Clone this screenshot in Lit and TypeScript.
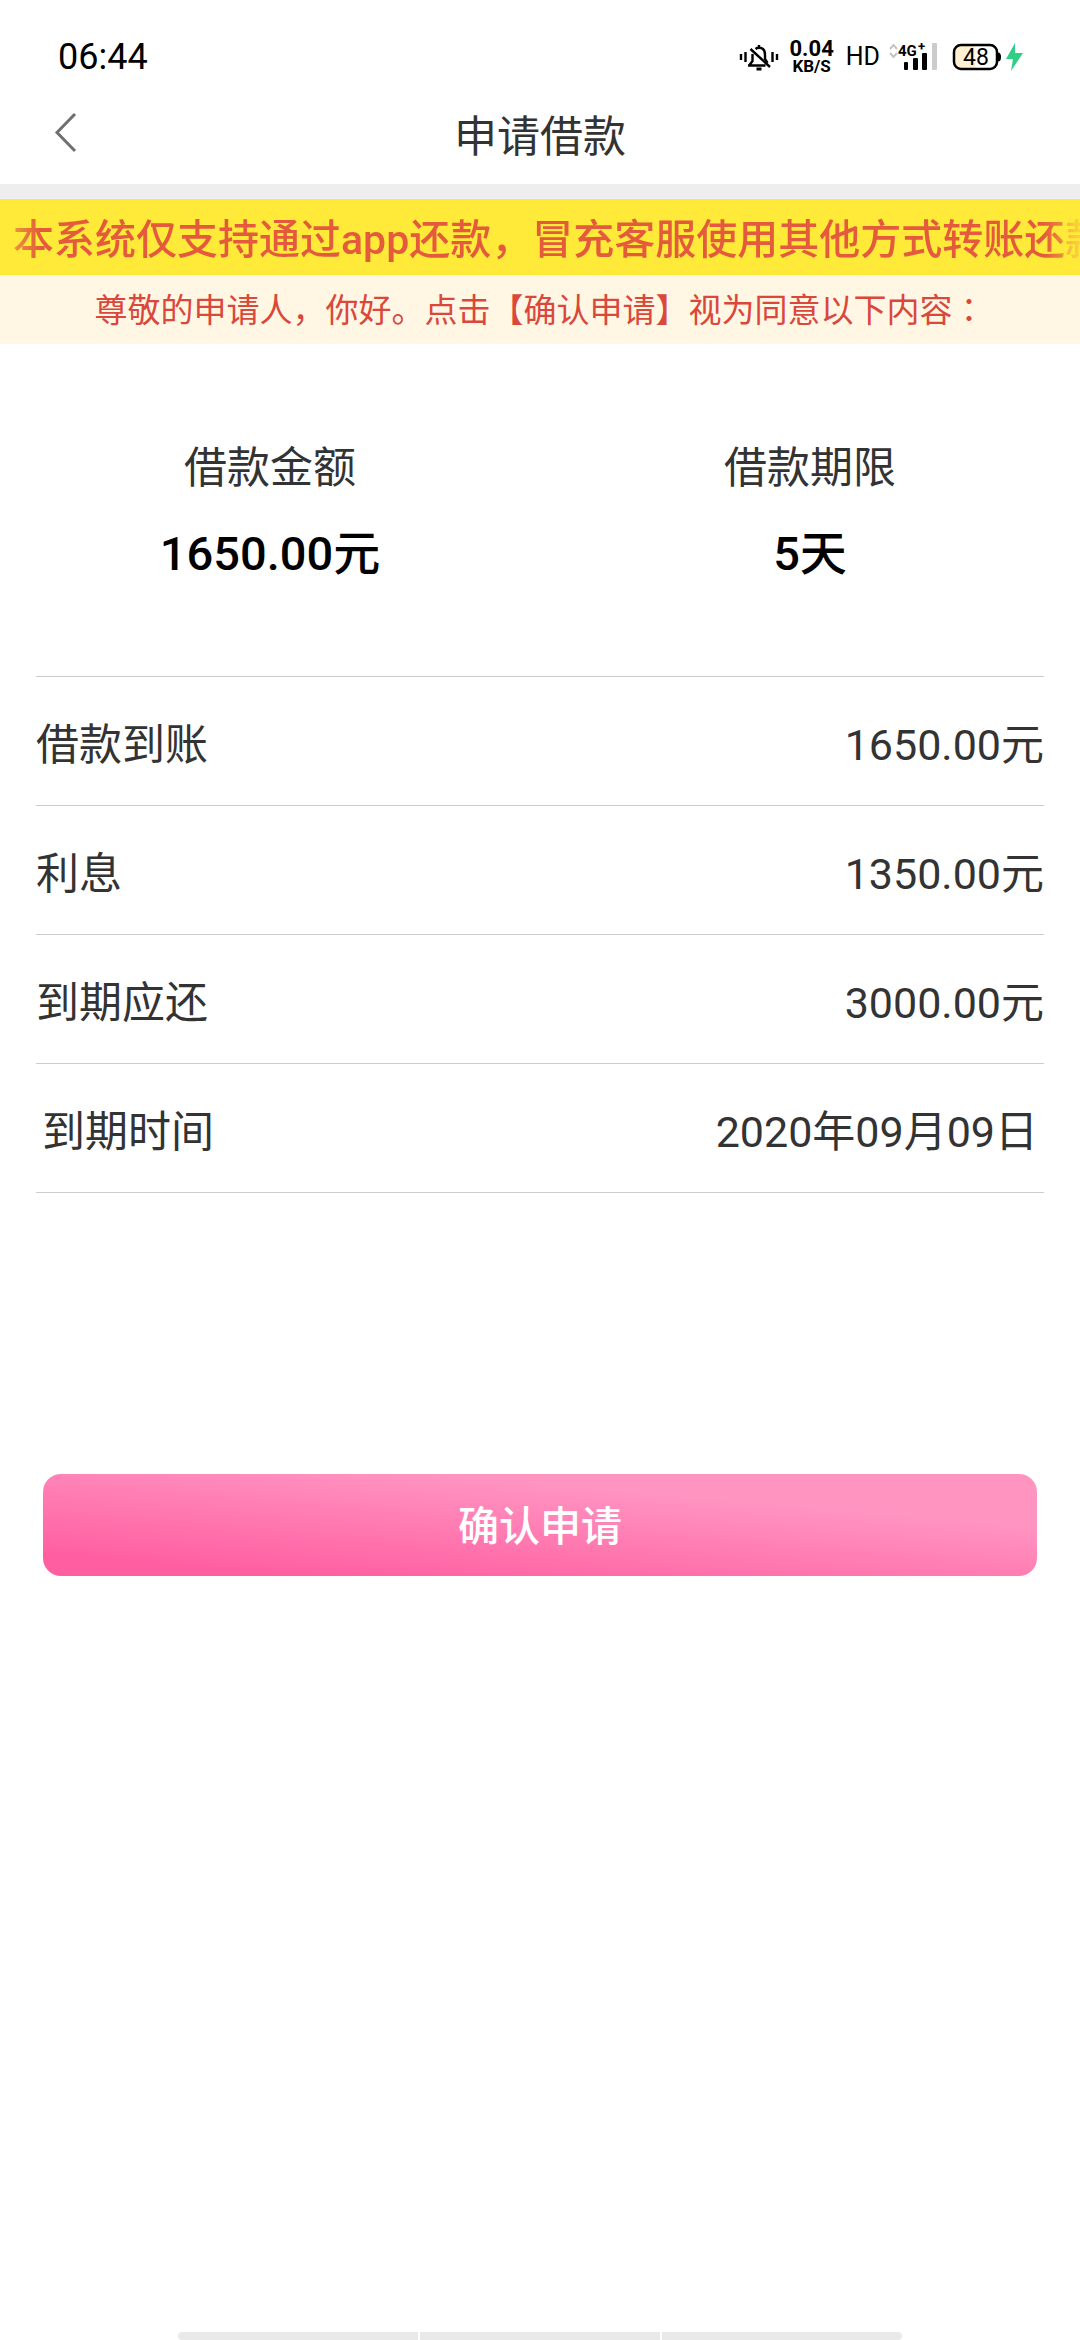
import { LitElement, html, css } from "lit";
import { customElement, property } from "lit/decorators.js";

const FONT = css`Roboto, "Noto Sans CJK SC", sans-serif`;

@customElement("status-bar")
class StatusBar extends LitElement {
  static styles = css`
    :host {
      display: flex;
      align-items: center;
      justify-content: space-between;
      padding: 18px 56px 0 58px;
      height: 78px;
      color: #000;
      font-family: ${FONT};
    }
    .time { font-size: 36px; line-height: 40px; }
    .icons { display: flex; align-items: center; }
    .icon { display: block; }
    .speed {
      display: flex;
      flex-direction: column;
      align-items: center;
      margin: 0 12px 0 11px;
      font-weight: 700;
    }
    .rate { font-size: 22px; line-height: 18px; }
    .unit { font-size: 17px; line-height: 16px; }
    .hd { font-size: 25px; line-height: 32px; margin-right: 9px; }
    .net { font: 700 15px ${FONT}; }
    .plus { font: 700 13px ${FONT}; }
    .level { font: 400 23px ${FONT}; }
    .battery { margin-left: 14px; }
  `;

  render() {
    return html`
      <span class="time">06:44</span>
      <div class="icons">
        <svg class="icon" width="40" height="30" viewBox="0 0 40 30" fill="none" stroke="#000" stroke-width="2.400">
          <path d="M2 12v6M6.500 10v10M33.500 10v10M38 12v6" />
          <path d="M9 23.500h17.500M10.500 23l3-4v-7M16.500 7q1.500-1.200 3.500-1.200 6 0 6 7v4l2.500 4" />
          <path d="M20 3v3M11.500 7l19.500 18" />
          <path d="M17.500 27h5" stroke-width="3" />
        </svg>
        <span class="speed"><span class="rate">0.04</span><span class="unit">KB/S</span></span>
        <span class="hd">HD</span>
        <svg class="icon" width="49" height="38" viewBox="0 -4 49 38">
          <path d="M1 7l3.500-4L8 7M1 11l3.500 4L8 11" fill="none" stroke="#c4c4c4" stroke-width="2" />
          <text class="net" x="9" y="14">4G</text>
          <text class="plus" x="29" y="9">+</text>
          <g fill="#000">
            <rect x="15" y="20" width="4" height="8" rx="1" />
            <rect x="24" y="16" width="5" height="12" rx="1" />
            <rect x="33" y="11" width="5" height="17" rx="1" />
          </g>
          <rect x="43" y="1" width="5" height="27" rx="1" fill="#ccc" />
        </svg>
        <svg class="icon battery" width="72" height="30" viewBox="0 0 72 30">
          <rect x="2" y="3" width="43" height="24" rx="7" fill="#fff" />
          <path d="M9 3h14v24H9a7 7 0 0 1-7-7V10a7 7 0 0 1 7-7z" fill="#fff0d2" />
          <rect x="2" y="3" width="43" height="24" rx="7" fill="none" stroke="#000" stroke-width="2.500" />
          <path d="M46 10.500q3 0 3 4.500t-3 4.500z" fill="#000" />
          <text class="level" x="24" y="23" text-anchor="middle">48</text>
          <path d="M63 1L54 17h7l-2 12 12-18h-8z" fill="#2fd085" />
        </svg>
      </div>
    `;
  }
}

@customElement("loan-row")
class LoanRow extends LitElement {
  @property() label = "";
  @property() value = "";
  static styles = css`
    :host {
      display: flex;
      align-items: center;
      justify-content: space-between;
      padding: 36px 0 28px;
      border-bottom: 1px solid #ccc;
      color: #333;
      font: 43px/64px ${FONT};
    }
    :host([inset]) { padding-left: 6px; padding-right: 6px; }
  `;
  render() {
    return html`<span>${this.label}</span><span>${this.value}</span>`;
  }
}

@customElement("app-root")
class AppRoot extends LitElement {
  static styles = css`
    :host {
      display: flex;
      flex-direction: column;
      min-height: 100vh;
      background: #fff;
      color: #333;
      font-family: ${FONT};
    }
    .nav {
      display: grid;
      grid-template-columns: 120px 1fr 120px;
      align-items: center;
      padding: 2px 0 8px;
      border-bottom: 15px solid #eee;
    }
    .back {
      justify-self: start;
      margin-left: 54px;
      padding: 0;
      border: 0;
      background: none;
      line-height: 0;
    }
    .title {
      margin: 0;
      text-align: center;
      font-size: 43px;
      font-weight: 400;
      line-height: 78px;
    }
    .marquee {
      padding-top: 6px;
      background: #ffea3a;
      color: #e35b3c;
      overflow: hidden;
    }
    .track {
      padding-left: 13px;
      font-size: 41px;
      font-weight: 500;
      line-height: 70px;
      white-space: nowrap;
      overflow: hidden;
      mask-image: linear-gradient(to right, rgba(0, 0, 0, 0.4), #000 40px, #000 calc(100% - 36px), rgba(0, 0, 0, 0.7) calc(100% - 18px), rgba(0, 0, 0, 0.4) calc(100% - 17px), rgba(0, 0, 0, 0.15));
    }
    .notice {
      margin: 0;
      padding-top: 3px;
      background: #fff6e4;
      color: #d9483b;
      text-align: center;
      font-size: 33px;
      line-height: 66px;
    }
    .colon { font-family: "Noto Sans CJK TC", sans-serif; line-height: 1; }
    .summary {
      display: grid;
      grid-template-columns: 1fr 1fr;
      margin: 0;
      padding: 92px 0 90px;
      text-align: center;
    }
    .name { font-size: 43px; line-height: 64px; }
    .amount {
      margin: 22px 0 0;
      color: #000;
      font-size: 47px;
      font-weight: 500;
      line-height: 64px;
    }
    .rows { margin: 0 36px; border-top: 1px solid #ccc; }
    .submit {
      margin: 281px 43px 0;
      padding: 4px 0 0;
      border: 0;
      border-radius: 18px;
      background: linear-gradient(5deg, #ff5fa1 12%, #ff94c1 72%);
      color: #fff;
      font: 500 41px/98px ${FONT};
    }
    .handles {
      display: grid;
      grid-template-columns: repeat(3, 1fr);
      gap: 2px;
      margin: auto 178px 0;
      border-radius: 6px;
      overflow: hidden;
    }
    .handle { height: 8px; background: #e9e9e9; }
  `;

  private summary = [
    ["借款金额", "1650.00元"],
    ["借款期限", "5天"],
  ];

  render() {
    return html`
      <status-bar></status-bar>
      <header class="nav">
        <button class="back" aria-label="返回">
          <svg width="24" height="48" viewBox="0 0 24 48" fill="none" stroke="#707070" stroke-width="3">
            <path d="M21 1L3 19.500 21 38" />
          </svg>
        </button>
        <h1 class="title">申请借款</h1>
      </header>
      <div class="marquee">
        <div class="track">本系统仅支持通过app还款，冒充客服使用其他方式转账还款</div>
      </div>
      <p class="notice">尊敬的申请人，你好。点击【确认申请】视为同意以下内容<span class="colon" lang="zh-TW">：</span></p>
      <dl class="summary">
        ${this.summary.map(
          ([name, amount]) => html`<div>
            <dt class="name">${name}</dt>
            <dd class="amount">${amount}</dd>
          </div>`
        )}
      </dl>
      <section class="rows">
        <loan-row label="借款到账" value="1650.00元"></loan-row>
        <loan-row label="利息" value="1350.00元"></loan-row>
        <loan-row label="到期应还" value="3000.00元"></loan-row>
        <loan-row inset label="到期时间" value="2020年09月09日"></loan-row>
      </section>
      <button class="submit">确认申请</button>
      <div class="handles">
        <span class="handle"></span><span class="handle"></span><span class="handle"></span>
      </div>
    `;
  }
}
